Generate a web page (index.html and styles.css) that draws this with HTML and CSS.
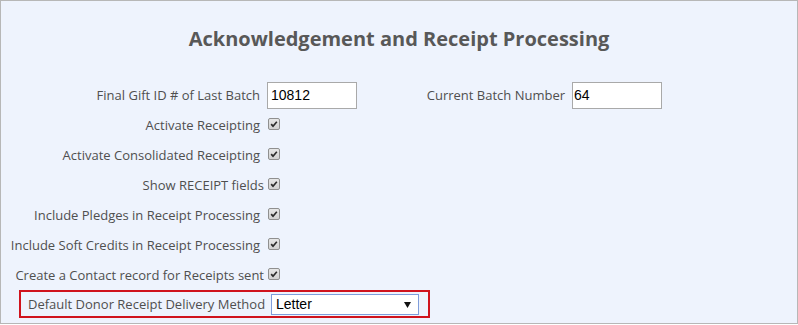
FILE: index.html
```html
<!DOCTYPE html>
<html>
<head>
<meta charset="utf-8">
<link rel="stylesheet" href="styles.css">
</head>
<body>
<div class="panel">
  <h1 class="title">Acknowledgement and Receipt Processing</h1>
  <div class="form">
    <div class="row">
      <label class="lbl">Final Gift ID # of Last Batch</label>
      <input class="txt" type="text" value="10812">
      <label class="lbl2">Current Batch Number</label>
      <input class="txt txt2" type="text" value="64">
    </div>
    <div class="row">
      <label class="lbl">Activate Receipting</label>
      <span class="cb"><svg width="12" height="12" viewBox="0 0 12 12"><path d="M2.6 6.2 L4.8 8.6 L9.4 3.2" fill="none" stroke="#2b2b2b" stroke-width="2"/></svg></span>
    </div>
    <div class="row">
      <label class="lbl">Activate Consolidated Receipting</label>
      <span class="cb"><svg width="12" height="12" viewBox="0 0 12 12"><path d="M2.6 6.2 L4.8 8.6 L9.4 3.2" fill="none" stroke="#2b2b2b" stroke-width="2"/></svg></span>
    </div>
    <div class="row">
      <label class="lbl tight">Show RECEIPT fields</label>
      <span class="cb"><svg width="12" height="12" viewBox="0 0 12 12"><path d="M2.6 6.2 L4.8 8.6 L9.4 3.2" fill="none" stroke="#2b2b2b" stroke-width="2"/></svg></span>
    </div>
    <div class="row">
      <label class="lbl">Include Pledges in Receipt Processing</label>
      <span class="cb"><svg width="12" height="12" viewBox="0 0 12 12"><path d="M2.6 6.2 L4.8 8.6 L9.4 3.2" fill="none" stroke="#2b2b2b" stroke-width="2"/></svg></span>
    </div>
    <div class="row">
      <label class="lbl">Include Soft Credits in Receipt Processing</label>
      <span class="cb"><svg width="12" height="12" viewBox="0 0 12 12"><path d="M2.6 6.2 L4.8 8.6 L9.4 3.2" fill="none" stroke="#2b2b2b" stroke-width="2"/></svg></span>
    </div>
    <div class="row">
      <label class="lbl tight">Create a Contact record for Receipts sent</label>
      <span class="cb"><svg width="12" height="12" viewBox="0 0 12 12"><path d="M2.6 6.2 L4.8 8.6 L9.4 3.2" fill="none" stroke="#2b2b2b" stroke-width="2"/></svg></span>
    </div>
    <div class="highlight">
      <label class="lbl3">Default Donor Receipt Delivery Method</label>
      <span class="selwrap">
        <select class="sel"><option>Letter</option><option>Email</option></select>
        <svg class="arrow" width="7" height="6" viewBox="0 0 7 6"><path d="M0 0 H7 L3.5 6 Z" fill="#111"/></svg>
      </span>
    </div>
  </div>
</div>
</body>
</html>
```

FILE: styles.css
```css
html, body {
  margin: 0;
  padding: 0;
  background: #ffffff;
}
.panel {
  box-sizing: border-box;
  width: 798px;
  height: 324px;
  border: 1px solid #b7b7b7;
  background: #eef3fd;
  font-family: "Open Sans", "Liberation Sans", sans-serif;
  color: #4f4f4f;
}
.title {
  margin: 0 0 28px 0;
  padding-top: 24px;
  font-size: 20px;
  line-height: 27px;
  font-weight: 700;
  text-align: center;
  color: #585858;
}
.form {
  display: flex;
  flex-direction: column;
}
.row {
  display: flex;
  align-items: center;
  height: 30px;
  font-size: 13px;
}
.lbl {
  box-sizing: border-box;
  width: 263px;
  padding-right: 4px;
  text-align: right;
  white-space: nowrap;
}
.lbl.tight {
  padding-right: 0;
}
.txt {
  box-sizing: border-box;
  width: 90px;
  height: 27px;
  margin: 0 0 0 3px;
  padding: 0 3px;
  border: 1px solid #a9a9a9;
  background: #ffffff;
  font-family: "Liberation Sans", Arial, sans-serif;
  font-size: 14px;
  color: #000000;
  outline: none;
}
.txt2 {
  margin-left: 4px;
  padding-left: 1px;
}
.lbl2 {
  box-sizing: border-box;
  width: 211px;
  padding-right: 3px;
  text-align: right;
  white-space: nowrap;
}
.cb {
  display: inline-flex;
  box-sizing: border-box;
  width: 12px;
  height: 12px;
  margin-left: 4px;
  margin-top: -3px;
  border: 1px solid #8f8f8f;
  border-radius: 2px;
  background: linear-gradient(#e6e6e6, #d2d2d2);
  align-items: center;
  justify-content: center;
}
.cb svg {
  display: block;
  width: 10px;
  height: 10px;
}
.highlight {
  box-sizing: border-box;
  display: flex;
  align-items: center;
  width: 411px;
  height: 28px;
  margin-left: 18px;
  padding-left: 7px;
  border: 2px solid #d0131d;
  font-size: 13px;
}
.lbl3 {
  white-space: nowrap;
  width: 235px;
}
.selwrap {
  position: relative;
  display: inline-block;
  margin-left: 8px;
  height: 21px;
}
.sel {
  -webkit-appearance: none;
  appearance: none;
  box-sizing: border-box;
  width: 148px;
  height: 21px;
  margin: 0;
  padding: 0 0 0 4px;
  border: 1px solid #7f9ddb;
  border-radius: 0;
  background: #ffffff;
  font-family: "Liberation Sans", Arial, sans-serif;
  font-size: 14px;
  color: #000000;
  outline: none;
}
.arrow {
  position: absolute;
  right: 8px;
  top: 8px;
  pointer-events: none;
}
```
